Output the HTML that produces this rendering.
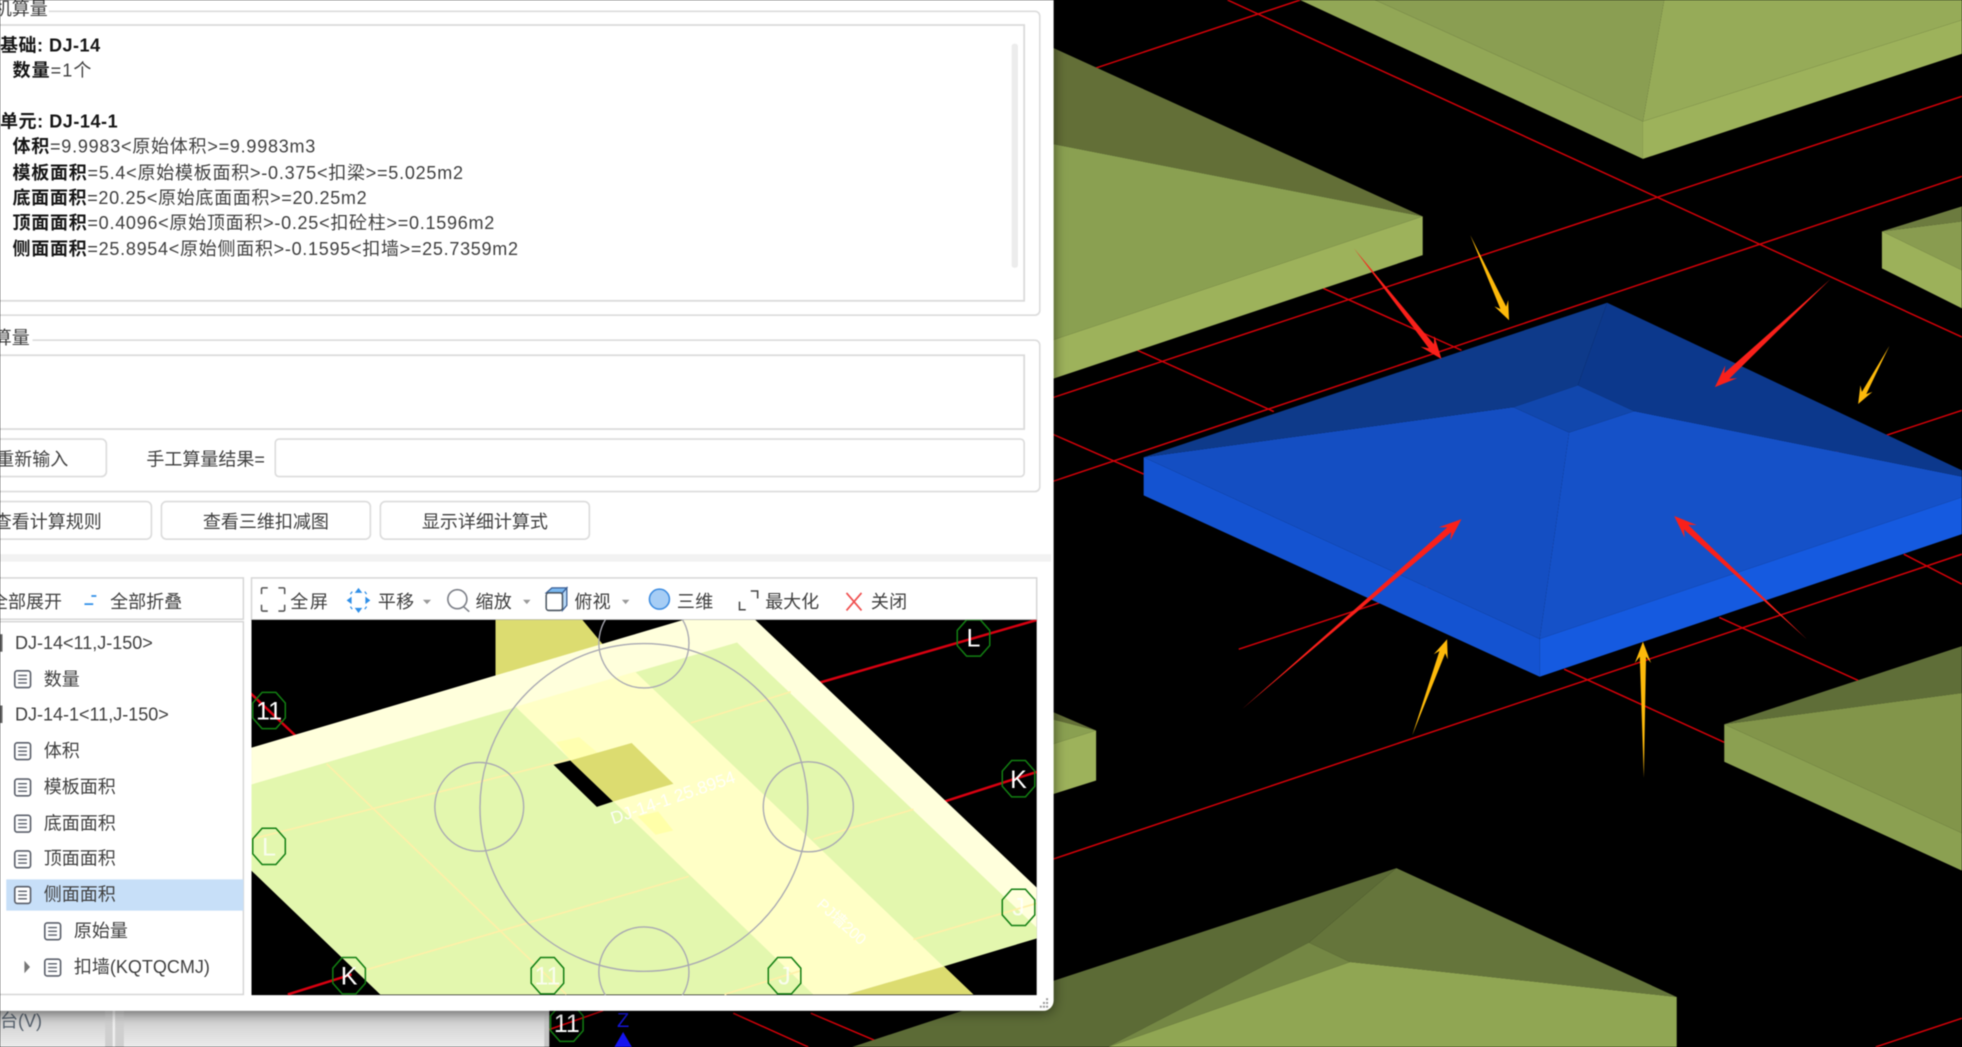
<!DOCTYPE html>
<html>
<head>
<meta charset="utf-8">
<title>算量</title>
<style>
html,body{margin:0;padding:0;background:#000;width:1962px;height:1047px;overflow:hidden}
svg{display:block;filter:blur(.4px)}
text{font-family:"Liberation Sans","Noto Sans CJK SC",sans-serif;font-size:14.4px;fill:#3f3f3f}
.b{font-weight:700;fill:#151515}
.m{fill:#fff;font-size:20px;text-anchor:middle}
</style>
</head>
<body>
<svg xmlns="http://www.w3.org/2000/svg" width="1962" height="1047" viewBox="0 0 1568 837" preserveAspectRatio="none">
<defs>
<clipPath id="vc"><rect x="201" y="495.5" width="627.5" height="300"/></clipPath>
<linearGradient id="bg" x1="0" y1="0" x2="0" y2="1"><stop offset="0" stop-color="#c0c0c0"/><stop offset=".45" stop-color="#d6d6d6"/><stop offset="1" stop-color="#ebebeb"/></linearGradient>
<filter id="sh" x="-5%" y="-5%" width="110%" height="110%"><feDropShadow dx="0" dy="1" stdDeviation="5" flood-color="#000" flood-opacity=".55"/></filter>
<g id="doc"><rect x="0.8" y="0.8" width="12.6" height="13.4" rx="2" fill="#fff" stroke="#5a5f6a" stroke-width="1.3"/><path d="M3.5 4.5h7M3.5 7.5h7M3.5 10.5h7" stroke="#5a5f6a" stroke-width="1.1"/></g>
<polygon id="oc" points="-5.5,-14.5 5.5,-14.5 13,-6 13,6 5.5,14.5 -5.5,14.5 -13,6 -13,-6" fill="none" stroke="#127f12" stroke-width="1.2"/>
</defs>

<rect width="1568" height="837" fill="#000"/>

<!-- grid lines -->
<g stroke="#d40008" stroke-width="1.2" fill="none">
<path d="M981 0L1568 269.5"/>
<path d="M1039 0L841 66"/>
<path d="M1568 77L841 318"/>
<path d="M1568 141L841 385"/>
<path d="M1568 328L990 519"/>
<path d="M1568 443L841 687"/>
<path d="M1568 814L1499 837"/>
<path d="M909 280L1018 329"/>
<path d="M841 347L914 379"/>
<path d="M1057.5 230.5L1168 280"/>
<path d="M1521.5 443L1568 467"/>
<path d="M1374 493.6L1485 544"/>
<path d="M1250 535L1378 593.4"/>
<path d="M586 810L646 837M648 810L702 833M439 823L482 808"/>
</g>

<!-- top slab -->
<polygon points="1099,0 1313,97 1313,127 1039,0" fill="#92a756"/>
<polygon points="1313,97 1568,16 1568,43 1313,127" fill="#9db25b"/>
<polygon points="1099,0 1330,0 1313,97" fill="#8a9e52"/>
<polygon points="1330,0 1568,0 1568,16 1313,97" fill="#96ab58"/>

<!-- upper-left slab -->
<polygon points="841,38 1137,173 841,115" fill="#636f37"/>
<polygon points="841,115 1137,173 841,272" fill="#8aa051"/>
<polygon points="841,272 1137,173 1137,204 841,303" fill="#9db25b"/>

<!-- right small slab -->
<polygon points="1504,185 1568,165 1568,177" fill="#6c7b3f"/>
<polygon points="1504,185 1568,177 1568,216" fill="#899c50"/>
<polygon points="1504,185 1568,216 1568,246.5 1504,214.5" fill="#9cb15a"/>

<!-- left small slab -->
<polygon points="841,569 876,584 841,575" fill="#636f37"/>
<polygon points="841,575 876,584 841,595" fill="#8aa051"/>
<polygon points="841,595 876,584 876,624 841,635" fill="#9db25b"/>

<!-- right lower slab -->
<polygon points="1378,579 1568,516.5 1568,554" fill="#5f6e38"/>
<polygon points="1378,579 1568,554 1568,666" fill="#82954a"/>
<polygon points="1378,579 1568,666 1568,696 1378,609" fill="#8ba051"/>

<!-- bottom slab -->
<polygon points="681,837 1116,694 1046,753.5 885,837" fill="#5c6b36"/>
<polygon points="1116,694 1340,797 1079,769 1046,753.5" fill="#65753b"/>
<polygon points="885,837 1046,753.5 1079,769 885.5,837" fill="#748744"/>
<polygon points="1079,769 1340,797 1340,837 885.5,837" fill="#90a653"/>

<!-- blue slab -->
<polygon points="914,365.5 1230.5,510.7 1230.5,541 914,396" fill="#1453d1"/>
<polygon points="1230.5,510.7 1568,397.5 1568,427 1230.5,541" fill="#155ae0"/>
<polygon points="914,365.5 1209.5,325.5 1254,345.8 1230.5,510.7" fill="#144ec2"/>
<polygon points="1254,345.8 1306,328.7 1568,381 1568,397.5 1230.5,510.7" fill="#1551c8"/>
<polygon points="914,365.5 1284.4,242 1261,308 1209.5,325.5" fill="#0e3a8a"/>
<polygon points="1284.4,242 1568,376 1568,381 1306,328.7 1261,308" fill="#0c388c"/>
<polygon points="1209.5,325.5 1261,308 1306,328.7 1254,345.8" fill="#1147ad"/>

<!-- arrows -->
<g fill="#f9201a">
<polygon points="1082,198.5 1145.9,275.2 1146.3,268.6 1152,287 1135.3,277.2 1141.9,278.4"/>
<polygon points="1463,223 1378,298.4 1378.8,292.1 1370.5,309.5 1388.4,302.3 1382,302.8"/>
<polygon points="992.5,567 1156.6,421.6 1149.8,421.5 1168,415 1159,432.1 1159.8,425.4"/>
<polygon points="1444,511 1349.2,419.6 1356,419.7 1338,412.5 1346.4,429.9 1345.8,423.2"/>
</g>
<g fill="#fdb90a">
<polygon points="1175,188 1203.7,245 1205.3,239.9 1206,256 1194.3,244.9 1199.1,247"/>
<polygon points="1510,276.5 1488,313.3 1486.8,308.1 1485,323 1496.4,313.3 1491.5,315.1"/>
<polygon points="1128.6,588 1150.4,520.4 1145.8,523 1156.5,511 1157,527.1 1155,522.2"/>
<polygon points="1313.7,621.7 1310.5,525 1306.5,530 1313,513 1319.5,530 1315.5,525"/>
</g>

<!-- app behind, bottom-left -->
<rect x="0" y="806" width="438" height="31" fill="url(#bg)"/>
<rect x="84" y="806" width="15" height="31" fill="#cfcfcf"/>
<rect x="90" y="806" width="2" height="31" fill="#eeeeee"/>
<rect x="435" y="806" width="4" height="31" fill="#c4c4c4"/>
<text x="0" y="821" style="fill:#55606c">台(V)</text>
<use href="#oc" x="453" y="818"/>
<text class="m" x="453" y="825">11</text>
<text x="498" y="821" style="fill:#1414d8;font-size:16px" text-anchor="middle">Z</text>
<polygon points="498,825 491,837 505,837" fill="#1414f0"/>

<!-- dialog -->
<path d="M-20 -20H842V800a8 8 0 0 1-8 8H-20Z" fill="#fff" filter="url(#sh)"/>

<g fill="none" stroke="#dcdcdc" stroke-width="1.3">
<rect x="-20" y="9" width="851" height="243" rx="4"/>
<rect x="-20" y="20" width="838.5" height="220.5" stroke="#dadada" stroke-width="1.4"/>
<rect x="-20" y="272" width="851" height="121" rx="4"/>
<rect x="-20" y="284" width="838.5" height="59" stroke="#dadada" stroke-width="1.4"/>
<rect x="-20" y="351" width="105" height="30" rx="4"/>
<rect x="220" y="351" width="598.5" height="30" rx="3"/>
<rect x="-20" y="401" width="141" height="30" rx="4"/>
<rect x="129" y="401" width="167" height="30" rx="4"/>
<rect x="304" y="401" width="167" height="30" rx="4"/>
</g>
<rect x="0" y="0" width="39" height="15" fill="#fff"/>
<rect x="0" y="263" width="26" height="15" fill="#fff"/>
<rect x="808.5" y="35" width="5" height="179" rx="2" fill="#ececec"/>
<rect x="0" y="443" width="840" height="6" fill="#f2f2f2"/>

<text x="-5" y="12">机算量</text>
<text x="-5" y="275">算量</text>

<text class="b" x="0" y="41" textLength="80">基础: DJ-14</text>
<text x="10" y="61" textLength="63"><tspan class="b">数量</tspan>=1个</text>
<text class="b" x="0" y="102" textLength="94">单元: DJ-14-1</text>
<text x="10" y="122" textLength="242"><tspan class="b">体积</tspan>=9.9983&lt;原始体积&gt;=9.9983m3</text>
<text x="10" y="143" textLength="360"><tspan class="b">模板面积</tspan>=5.4&lt;原始模板面积&gt;-0.375&lt;扣梁&gt;=5.025m2</text>
<text x="10" y="163" textLength="283"><tspan class="b">底面面积</tspan>=20.25&lt;原始底面面积&gt;=20.25m2</text>
<text x="10" y="183" textLength="385"><tspan class="b">顶面面积</tspan>=0.4096&lt;原始顶面积&gt;-0.25&lt;扣砼柱&gt;=0.1596m2</text>
<text x="10" y="204" textLength="404"><tspan class="b">侧面面积</tspan>=25.8954&lt;原始侧面积&gt;-0.1595&lt;扣墙&gt;=25.7359m2</text>

<text x="-3" y="372">重新输入</text>
<text x="117" y="372">手工算量结果=</text>
<text x="-5" y="422">查看计算规则</text>
<text x="212.5" y="422" text-anchor="middle">查看三维扣减图</text>
<text x="387.5" y="422" text-anchor="middle">显示详细计算式</text>

<!-- left toolbar + tree -->
<g fill="none" stroke="#d6d6d6" stroke-width="1.2">
<rect x="-20" y="462" width="214.5" height="33"/>
<rect x="-20" y="497" width="214.5" height="298"/>
<rect x="201" y="462" width="627.5" height="33.5"/>
</g>
<text x="-8" y="486">全部展开</text>
<path d="M73 476.5h4M67.5 483h7" stroke="#2f8fe8" stroke-width="1.4" fill="none"/>
<text x="88" y="486">全部折叠</text>

<rect x="5" y="703" width="189.5" height="25" fill="#c7dff8"/>
<rect x="-1" y="507" width="3" height="14" fill="#666"/>
<rect x="-1" y="564" width="3" height="14" fill="#666"/>
<use href="#doc" x="11" y="535.5"/><use href="#doc" x="11" y="593"/><use href="#doc" x="11" y="622"/><use href="#doc" x="11" y="651"/><use href="#doc" x="11" y="679.5"/><use href="#doc" x="11" y="708"/><use href="#doc" x="35" y="737"/><use href="#doc" x="35" y="766"/>
<polygon points="19.5,768 19.5,778 24,773" fill="#777"/>
<text x="12" y="519">DJ-14&lt;11,J-150&gt;</text>
<text x="35" y="548">数量</text>
<text x="12" y="576">DJ-14-1&lt;11,J-150&gt;</text>
<text x="35" y="605">体积</text>
<text x="35" y="634">模板面积</text>
<text x="35" y="663">底面面积</text>
<text x="35" y="691">顶面面积</text>
<text x="35" y="720">侧面面积</text>
<text x="59" y="749">原始量</text>
<text x="59" y="778">扣墙(KQTQCMJ)</text>

<!-- right toolbar -->
<path d="M209 475v-4a1 1 0 0 1 1-1h4M222.5 470h4a1 1 0 0 1 1 1v4M209 483.5v4a1 1 0 0 0 1 1h4M222.5 488.5h4a1 1 0 0 0 1-1v-4" fill="none" stroke="#555" stroke-width="1.2"/>
<text x="232" y="486" textLength="30">全屏</text>
<g fill="#2f8fe8"><polygon points="286.5,470 283.5,474 289.5,474"/><polygon points="286.5,490 283.5,486 289.5,486"/><polygon points="277,480 281,477 281,483"/><polygon points="296,480 292,477 292,483"/></g>
<path d="M281.5 473l-1.5 2M291.5 473l1.5 2M281.5 487l-1.5-2M291.5 487l1.5-2" stroke="#2f8fe8" stroke-width="1"/>
<text x="302" y="486" textLength="29">平移</text>
<polygon points="338,479.5 344.5,479.5 341.2,483" fill="#999"/>
<circle cx="365.5" cy="479" r="7.6" fill="none" stroke="#7d8088" stroke-width="1.3"/><path d="M370.5 485l4.5 4" stroke="#7d8088" stroke-width="1.3"/>
<text x="380" y="486" textLength="29">缩放</text>
<polygon points="418,479.5 424,479.5 421,483" fill="#999"/>
<polygon points="436.5,474 441,470 453,470 449.5,474" fill="#7ab8f0" stroke="#3a5f95" stroke-width="1"/>
<polygon points="449.5,474 453,470 453,484 449.5,488" fill="#b9daf8" stroke="#3a5f95" stroke-width="1"/>
<rect x="436.5" y="474" width="13" height="14" rx="2" fill="#fff" stroke="#4a5560" stroke-width="1.2"/>
<text x="459" y="486" textLength="29">俯视</text>
<polygon points="497,479.5 503,479.5 500,483" fill="#999"/>
<circle cx="527" cy="479" r="8" fill="#a6cdf5" stroke="#3a8ae0" stroke-width="1.2"/>
<text x="541" y="486" textLength="29">三维</text>
<path d="M591 481v6.5h5M600 472.5h5.5v6" fill="none" stroke="#444" stroke-width="1.2"/>
<text x="611.6" y="486" textLength="43">最大化</text>
<path d="M676.5 474l12 14M688.5 474l-12 14" stroke="#f05050" stroke-width="1.4"/>
<text x="696" y="486" textLength="29">关闭</text>

<!-- viewer -->
<g clip-path="url(#vc)">
<rect x="201" y="495" width="628" height="301" fill="#000"/>
<g stroke="#d80010" stroke-width="2" fill="none">
<path d="M829 495.5L654 546M813 622L754 641M829 617L813 622M200 554L236 588M230 795L281 779"/>
</g>
<polygon points="396,495 465,495 490,525 396,545" fill="#dcdc70"/>
<polygon points="677,795 754,772 778,795" fill="#dcdc70"/>
<polygon points="200,598 548,495 603,495 829,710 829,750 677,795 304,795 200,695" fill="#ffffdc"/>
<polygon points="589,513.6 829,742 829,750 754,772.6 650,795 304,795 200,695 200,627.4" fill="#e3f7ae"/>
<polygon points="412,565 507.6,537 754,772.6 677,795 650,795" fill="#ffffc6"/>
<polygon points="444.4,593.3 462.8,589.3 485,608 455.8,608" fill="#ffffb0"/>
<polygon points="509.6,652.7 526,648.7 538,663.9 524,667.3" fill="#ffffa8"/>
<polygon points="442.4,611.4 455.8,608 490,640.7 477,645" fill="#000"/>
<polygon points="455.8,608 504.8,594 538.2,626.6 490,640.7" fill="#dcdc70"/>
<g stroke="#fff0a8" stroke-width="1.3" fill="none">
<path d="M200 671L455 607M552 578L632 553"/>
<path d="M293.6 775L550.4 700.6"/>
<path d="M579 795L640 776"/>
<path d="M650 671L730 647"/>
<path d="M730 751L829 722"/>
<path d="M261 610.6L452.6 795"/>
</g>
<g fill="none" stroke="#a9a9b2" stroke-width="1.1">
<circle cx="514.6" cy="645.5" r="131"/>
<circle cx="383" cy="645" r="35.5"/>
<circle cx="646" cy="645" r="36"/>
<circle cx="514.6" cy="514" r="36"/>
<circle cx="514.6" cy="777" r="36"/>
</g>
<use href="#oc" x="215" y="568"/><use href="#oc" x="778" y="510"/><use href="#oc" x="814" y="622.5"/><use href="#oc" x="814" y="725.4"/><use href="#oc" x="215" y="676.6"/><use href="#oc" x="279" y="780"/><use href="#oc" x="437.5" y="780"/><use href="#oc" x="627" y="780"/>
<text class="m" x="215" y="575">11</text>
<text class="m" x="778" y="517">L</text>
<text class="m" x="814" y="630">K</text>
<text class="m" x="814" y="732" style="opacity:.8">J</text>
<text class="m" x="215" y="684" style="opacity:.8">L</text>
<text class="m" x="279" y="787">K</text>
<text class="m" x="437.5" y="787" style="opacity:.8">11</text>
<text class="m" x="627" y="787" style="opacity:.8">J</text>
<text x="0" y="0" transform="translate(490 659) rotate(-19)" style="fill:#fff;font-size:14px;opacity:.9">DJ-14-1 25.8954</text>
<text x="0" y="0" transform="translate(652 724) rotate(42)" style="fill:#fff;font-size:12.5px;opacity:.9">PJ墙200</text>
</g>

<!-- resize grip -->
<g fill="#9a9a9a">
<rect x="836" y="798" width="1.6" height="1.6"/>
<rect x="833.5" y="801" width="1.6" height="1.6"/><rect x="836" y="801" width="1.6" height="1.6"/>
<rect x="831" y="804" width="1.6" height="1.6"/><rect x="833.5" y="804" width="1.6" height="1.6"/><rect x="836" y="804" width="1.6" height="1.6"/>
</g>
</svg>
</body>
</html>
